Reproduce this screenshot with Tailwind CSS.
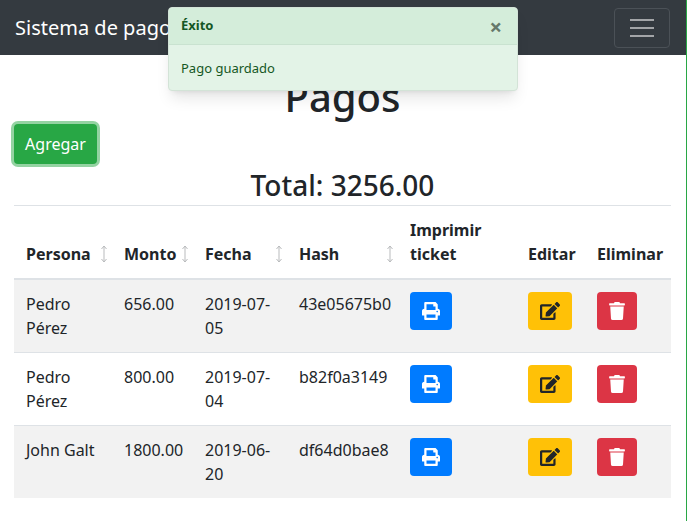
<!DOCTYPE html>
<html lang="es">

<head>
    <meta charset="UTF-8">
    <meta name="viewport" content="width=device-width, initial-scale=1.0">
    <title>Pagos</title>
    <script src="https://cdn.jsdelivr.net/npm/@tailwindcss/browser@4"></script>
</head>

<body class="bg-white text-[#212529] font-['Noto_Sans','Open_Sans',sans-serif] text-base">
    <div class="relative min-h-[521px] overflow-hidden border-r border-[#28a745]">
        <!-- navbar -->
        <nav class="h-[55px] bg-[#343a40] flex items-center justify-between pl-[15px] pr-[16px]">
            <a href="#" class="text-xl text-white">Sistema de pagos</a>
            <button class="w-[56px] h-[40px] border border-[#4b5157] rounded flex flex-col items-center justify-center gap-[6px]">
                <span class="block w-[24px] h-[2px] bg-[#a3a5a8]"></span>
                <span class="block w-[24px] h-[2px] bg-[#a3a5a8]"></span>
                <span class="block w-[24px] h-[2px] bg-[#a3a5a8]"></span>
            </button>
        </nav>

        <!-- toast -->
        <div class="absolute left-[168px] top-[7px] w-[350px] h-[84px] rounded border border-[#d3e3d7] bg-[#e3f3e7] shadow-lg text-[#155724] text-[13px]">
            <div class="h-[37px] flex items-center justify-between pl-3 pr-[15px] bg-[#d4edda] border-b border-[#c9e2d0] rounded-t">
                <strong class="font-bold">Éxito</strong>
                <span class="text-[22px] leading-none font-bold text-[#65786b]">×</span>
            </div>
            <div class="pt-[14px] pl-3">Pago guardado</div>
        </div>

        <main class="px-[14px] pr-[15px]">
            <h1 class="text-center text-[40px] leading-[48px] font-medium mt-[18px]">Pagos</h1>
            <button class="block mt-[3px] h-[40px] w-[83px] bg-[#28a745] text-white rounded ring-[3px] ring-[#94d3a2]">Agregar</button>
            <h3 class="text-center text-[28px] leading-[34px] font-medium mt-[4px] mb-[3px]">Total: 3256.00</h3>

            <table class="w-[657px] table-fixed border-collapse">
                <colgroup>
                    <col class="w-[98px]">
                    <col class="w-[81px]">
                    <col class="w-[94px]">
                    <col class="w-[111px]">
                    <col class="w-[118px]">
                    <col class="w-[69px]">
                    <col class="w-[86px]">
                </colgroup>
                <thead>
                    <tr class="border-t border-b-2 border-t-[#dee2e6] border-b-[#dee2e6] text-left font-bold align-bottom">
                        <th class="p-3 pr-1">
                            <div class="flex justify-between items-center">Persona
                                <svg class="w-[8px] h-[18px] text-[#b9bbbd]" viewBox="0 0 8 18" fill="none" stroke="currentColor"><path d="M4 1v16M1.5 4 4 1l2.500 3M1.500 14 4 17l2.500-3"/></svg>
                            </div>
                        </th>
                        <th class="p-3 pr-1">
                            <div class="flex justify-between items-center">Monto
                                <svg class="w-[8px] h-[18px] text-[#b9bbbd]" viewBox="0 0 8 18" fill="none" stroke="currentColor"><path d="M4 1v16M1.5 4 4 1l2.500 3M1.500 14 4 17l2.500-3"/></svg>
                            </div>
                        </th>
                        <th class="p-3 pr-1">
                            <div class="flex justify-between items-center">Fecha
                                <svg class="w-[8px] h-[18px] text-[#b9bbbd]" viewBox="0 0 8 18" fill="none" stroke="currentColor"><path d="M4 1v16M1.5 4 4 1l2.500 3M1.500 14 4 17l2.500-3"/></svg>
                            </div>
                        </th>
                        <th class="p-3 pr-1">
                            <div class="flex justify-between items-center">Hash
                                <svg class="w-[8px] h-[18px] text-[#b9bbbd]" viewBox="0 0 8 18" fill="none" stroke="currentColor"><path d="M4 1v16M1.5 4 4 1l2.500 3M1.500 14 4 17l2.500-3"/></svg>
                            </div>
                        </th>
                        <th class="p-3 leading-6">Imprimir ticket</th>
                        <th class="p-3">Editar</th>
                        <th class="p-3">Eliminar</th>
                    </tr>
                </thead>
                <tbody class="align-top">
                    <tr class="bg-[#f2f2f2] border-b border-[#dee2e6]">
                        <td class="p-3 leading-6">Pedro Pérez</td>
                        <td class="p-3 leading-6">656.00</td>
                        <td class="p-3 leading-6">2019-07-05</td>
                        <td class="p-3 leading-6">43e05675b0</td>
                        <td class="p-3"><button class="w-[42px] h-[38px] rounded bg-[#007bff] flex items-center justify-center"><svg class="w-[18px] h-[18px]" viewBox="0 0 512 512" fill="#fff"><path d="M448 192V77.25c0-8.49-3.37-16.62-9.37-22.63L393.37 9.37c-6-6-14.14-9.37-22.63-9.37H96C78.33 0 64 14.33 64 32v160c-35.35 0-64 28.65-64 64v112c0 8.84 7.16 16 16 16h48v96c0 17.67 14.33 32 32 32h320c17.67 0 32-14.33 32-32v-96h48c8.84 0 16-7.16 16-16V256c0-35.35-28.65-64-64-64zm-64 256H128v-96h256v96zm0-224H128V64h192v48c0 8.84 7.16 16 16 16h48v96zm48 72c-13.25 0-24-10.75-24-24 0-13.26 10.75-24 24-24s24 10.74 24 24c0 13.25-10.75 24-24 24z"/></svg></button></td>
                        <td class="p-3"><button class="w-[44px] h-[38px] rounded bg-[#ffc107] flex items-center justify-center"><svg class="w-[20px] h-[18px]" viewBox="0 0 576 512" fill="#212529"><path d="M402.6 83.2l90.2 90.2c3.8 3.8 3.8 10 0 13.8L274.4 405.6l-92.8 10.3c-12.4 1.4-22.9-9.1-21.5-21.5l10.3-92.8L388.8 83.2c3.8-3.8 10-3.8 13.8 0zm162-22.9l-48.8-48.8c-15.2-15.2-39.9-15.2-55.2 0l-35.4 35.4c-3.8 3.8-3.8 10 0 13.8l90.2 90.2c3.8 3.8 10 3.8 13.8 0l35.4-35.4c15.2-15.3 15.2-40 0-55.2zM384 346.2V448H64V128h229.8c3.2 0 6.2-1.3 8.5-3.500l40-40c7.600-7.600 2.200-20.500-8.500-20.500H48C21.500 64 0 85.500 0 112v352c0 26.500 21.500 48 48 48h352c26.500 0 48-21.500 48-48V306.200c0-10.700-12.900-16-20.500-8.500l-40 40c-2.200 2.300-3.500 5.300-3.500 8.500z"/></svg></button></td>
                        <td class="p-3"><button class="w-[40px] h-[38px] rounded bg-[#dc3545] flex items-center justify-center"><svg class="w-[16px] h-[18px]" viewBox="0 0 448 512" fill="#fff"><path d="M432 32H312l-9.400-18.700A24 24 0 0 0 281.100 0H166.800a23.720 23.720 0 0 0-21.400 13.300L136 32H16A16 16 0 0 0 0 48v32a16 16 0 0 0 16 16h416a16 16 0 0 0 16-16V48a16 16 0 0 0-16-16zM53.200 467a48 48 0 0 0 47.900 45h245.800a48 48 0 0 0 47.900-45L416 128H32z"/></svg></button></td>
                    </tr>
                    <tr class="border-b border-[#dee2e6]">
                        <td class="p-3 leading-6">Pedro Pérez</td>
                        <td class="p-3 leading-6">800.00</td>
                        <td class="p-3 leading-6">2019-07-04</td>
                        <td class="p-3 leading-6">b82f0a3149</td>
                        <td class="p-3"><button class="w-[42px] h-[38px] rounded bg-[#007bff] flex items-center justify-center"><svg class="w-[18px] h-[18px]" viewBox="0 0 512 512" fill="#fff"><path d="M448 192V77.25c0-8.49-3.37-16.62-9.37-22.63L393.37 9.37c-6-6-14.14-9.37-22.63-9.37H96C78.33 0 64 14.33 64 32v160c-35.35 0-64 28.65-64 64v112c0 8.84 7.16 16 16 16h48v96c0 17.67 14.33 32 32 32h320c17.67 0 32-14.33 32-32v-96h48c8.84 0 16-7.16 16-16V256c0-35.35-28.65-64-64-64zm-64 256H128v-96h256v96zm0-224H128V64h192v48c0 8.84 7.16 16 16 16h48v96zm48 72c-13.25 0-24-10.75-24-24 0-13.26 10.75-24 24-24s24 10.74 24 24c0 13.25-10.75 24-24 24z"/></svg></button></td>
                        <td class="p-3"><button class="w-[44px] h-[38px] rounded bg-[#ffc107] flex items-center justify-center"><svg class="w-[20px] h-[18px]" viewBox="0 0 576 512" fill="#212529"><path d="M402.6 83.2l90.2 90.2c3.8 3.8 3.8 10 0 13.8L274.4 405.6l-92.8 10.3c-12.4 1.4-22.9-9.1-21.5-21.5l10.3-92.8L388.8 83.2c3.8-3.8 10-3.8 13.8 0zm162-22.9l-48.8-48.8c-15.2-15.2-39.9-15.2-55.2 0l-35.4 35.4c-3.8 3.8-3.8 10 0 13.8l90.2 90.2c3.8 3.8 10 3.8 13.8 0l35.4-35.4c15.2-15.3 15.2-40 0-55.2zM384 346.2V448H64V128h229.8c3.2 0 6.2-1.3 8.5-3.500l40-40c7.600-7.600 2.200-20.500-8.500-20.500H48C21.500 64 0 85.500 0 112v352c0 26.500 21.500 48 48 48h352c26.500 0 48-21.500 48-48V306.200c0-10.700-12.900-16-20.500-8.500l-40 40c-2.200 2.300-3.500 5.300-3.500 8.500z"/></svg></button></td>
                        <td class="p-3"><button class="w-[40px] h-[38px] rounded bg-[#dc3545] flex items-center justify-center"><svg class="w-[16px] h-[18px]" viewBox="0 0 448 512" fill="#fff"><path d="M432 32H312l-9.400-18.700A24 24 0 0 0 281.100 0H166.800a23.720 23.720 0 0 0-21.400 13.300L136 32H16A16 16 0 0 0 0 48v32a16 16 0 0 0 16 16h416a16 16 0 0 0 16-16V48a16 16 0 0 0-16-16zM53.200 467a48 48 0 0 0 47.900 45h245.800a48 48 0 0 0 47.900-45L416 128H32z"/></svg></button></td>
                    </tr>
                    <tr class="bg-[#f2f2f2]">
                        <td class="p-3 leading-6">John Galt</td>
                        <td class="p-3 leading-6">1800.00</td>
                        <td class="p-3 leading-6">2019-06-20</td>
                        <td class="p-3 leading-6">df64d0bae8</td>
                        <td class="p-3"><button class="w-[42px] h-[38px] rounded bg-[#007bff] flex items-center justify-center"><svg class="w-[18px] h-[18px]" viewBox="0 0 512 512" fill="#fff"><path d="M448 192V77.25c0-8.49-3.37-16.62-9.37-22.63L393.37 9.37c-6-6-14.14-9.37-22.63-9.37H96C78.33 0 64 14.33 64 32v160c-35.35 0-64 28.65-64 64v112c0 8.84 7.16 16 16 16h48v96c0 17.67 14.33 32 32 32h320c17.67 0 32-14.33 32-32v-96h48c8.84 0 16-7.16 16-16V256c0-35.35-28.65-64-64-64zm-64 256H128v-96h256v96zm0-224H128V64h192v48c0 8.84 7.16 16 16 16h48v96zm48 72c-13.25 0-24-10.75-24-24 0-13.26 10.75-24 24-24s24 10.74 24 24c0 13.25-10.75 24-24 24z"/></svg></button></td>
                        <td class="p-3"><button class="w-[44px] h-[38px] rounded bg-[#ffc107] flex items-center justify-center"><svg class="w-[20px] h-[18px]" viewBox="0 0 576 512" fill="#212529"><path d="M402.6 83.2l90.2 90.2c3.8 3.8 3.8 10 0 13.8L274.4 405.6l-92.8 10.3c-12.4 1.4-22.9-9.1-21.5-21.5l10.3-92.8L388.8 83.2c3.8-3.8 10-3.8 13.8 0zm162-22.9l-48.8-48.8c-15.2-15.2-39.9-15.2-55.2 0l-35.4 35.4c-3.8 3.8-3.8 10 0 13.8l90.2 90.2c3.8 3.8 10 3.8 13.8 0l35.4-35.4c15.2-15.3 15.2-40 0-55.2zM384 346.2V448H64V128h229.8c3.2 0 6.2-1.3 8.5-3.500l40-40c7.600-7.600 2.200-20.500-8.500-20.500H48C21.500 64 0 85.500 0 112v352c0 26.500 21.500 48 48 48h352c26.500 0 48-21.500 48-48V306.200c0-10.700-12.900-16-20.500-8.500l-40 40c-2.200 2.300-3.500 5.300-3.500 8.500z"/></svg></button></td>
                        <td class="p-3"><button class="w-[40px] h-[38px] rounded bg-[#dc3545] flex items-center justify-center"><svg class="w-[16px] h-[18px]" viewBox="0 0 448 512" fill="#fff"><path d="M432 32H312l-9.400-18.700A24 24 0 0 0 281.100 0H166.800a23.720 23.720 0 0 0-21.400 13.300L136 32H16A16 16 0 0 0 0 48v32a16 16 0 0 0 16 16h416a16 16 0 0 0 16-16V48a16 16 0 0 0-16-16zM53.200 467a48 48 0 0 0 47.900 45h245.800a48 48 0 0 0 47.900-45L416 128H32z"/></svg></button></td>
                    </tr>
                </tbody>
            </table>
        </main>
    </div>
</body>

</html>
